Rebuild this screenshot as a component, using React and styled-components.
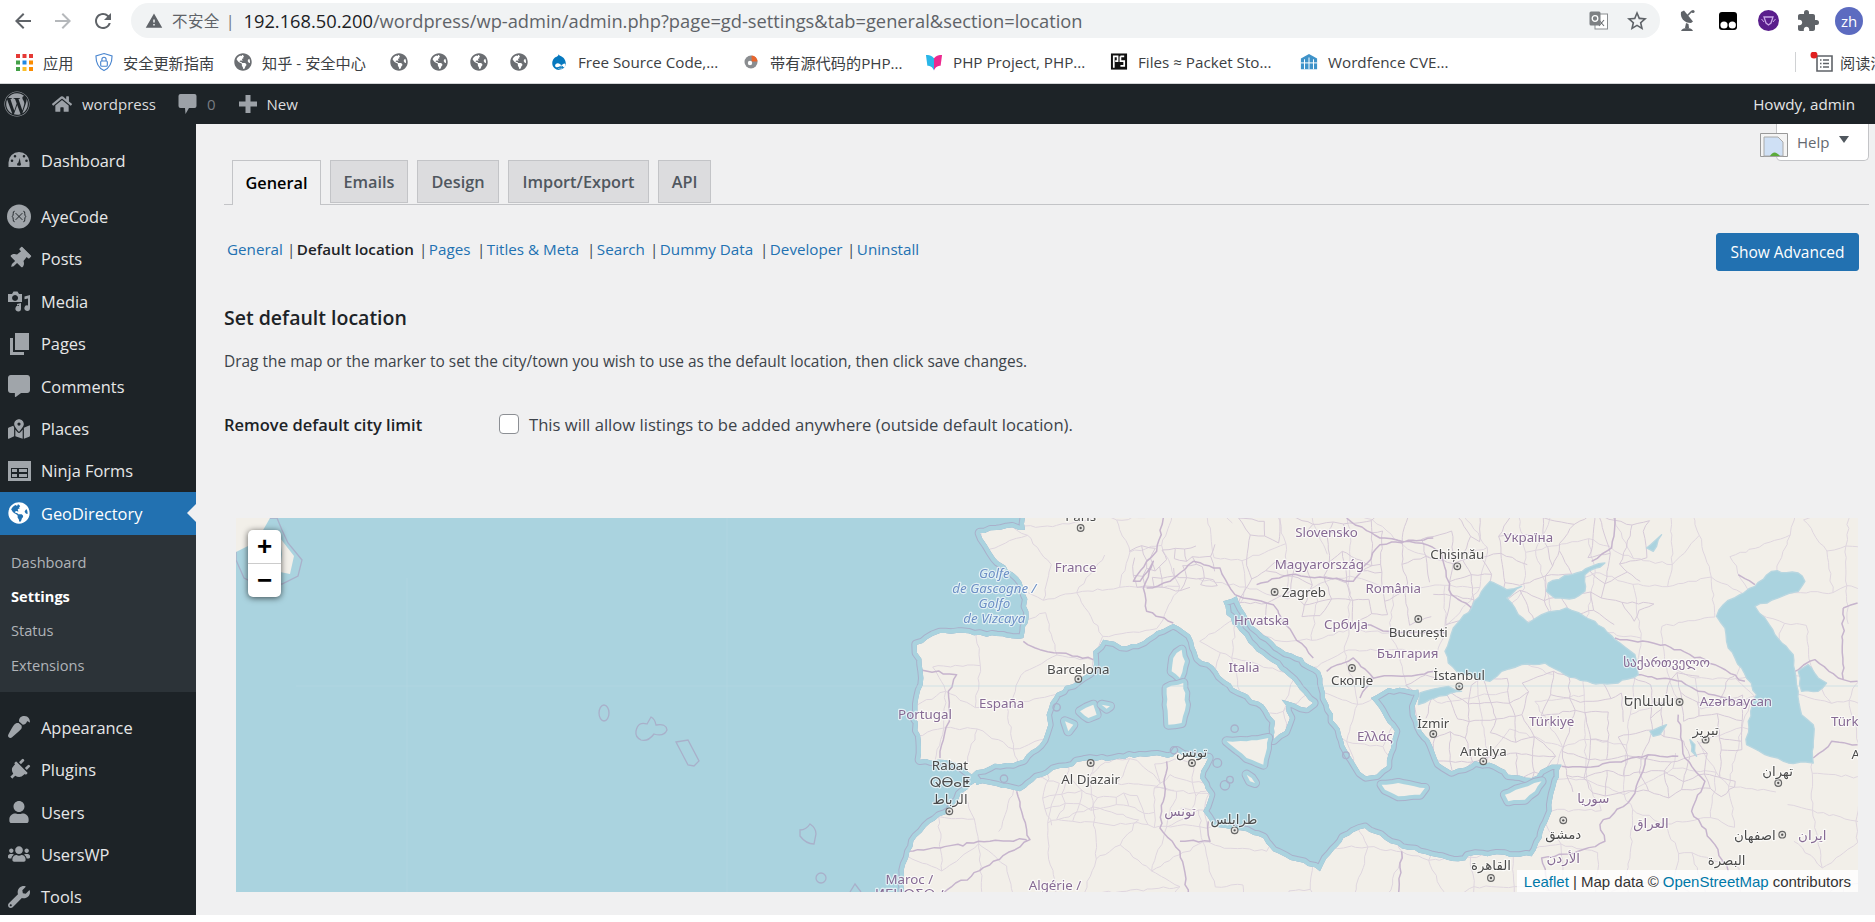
import React from "react";
import styled, { createGlobalStyle } from "styled-components";
import { FaWordpress, FaHome, FaThumbtack, FaCommentAlt, FaGlobeAmericas, FaPaintBrush, FaPlug, FaUser, FaUsers, FaWrench, FaDrupal, FaMapMarkedAlt } from "react-icons/fa";
import { MdArrowBack, MdArrowForward, MdRefresh, MdWarning, MdStarBorder, MdExtension } from "react-icons/md";

const UI = `"Open Sans", "Noto Sans CJK SC", sans-serif`;

const GlobalStyle = createGlobalStyle`
  body {
    margin: 0;
    background: #fff;
    font-family: ${UI};
    overflow: hidden;
  }
`;

/* browser chrome */
const Toolbar = styled.div`
  height: 41px;
  display: flex;
  align-items: center;
  position: relative;
`;

const NavIcon = styled.span`
  width: 40px;
  display: flex;
  justify-content: center;
  font-size: 24px;
  color: ${(p) => (p.$dim ? "#b5b8bb" : "#5f6368")};
`;

const NavGroup = styled.div`
  display: flex;
  padding-left: 3px;
  width: 131px;
  box-sizing: border-box;
`;

const Omnibox = styled.div`
  width: 1529px;
  height: 35px;
  border-radius: 18px;
  background: #f1f3f4;
  display: flex;
  align-items: center;
  padding-left: 14px;
  box-sizing: border-box;
  font-size: 18.3px;
  color: #5f6368;
  white-space: nowrap;
`;

const Insecure = styled.span`
  margin-left: 9px;
  font-size: 15.5px;
  letter-spacing: 0.4px;
`;

const UrlPipe = styled.span`
  margin: 0 9px 0 6px;
  font-size: 16px;
  color: #70757a;
`;

const UrlHost = styled.span`
  color: #202124;
`;

const OmniRight = styled.div`
  margin-left: auto;
  display: flex;
  align-items: center;
  gap: 17px;
  padding-right: 11px;
`;

const ExtIcons = styled.div`
  display: flex;
  align-items: center;
  width: 215px;
  padding-left: 16px;
  gap: 16px;
  box-sizing: border-box;
`;

const ExtBox = styled.span`
  width: 24px;
  height: 24px;
  display: flex;
  align-items: center;
  justify-content: center;
  font-size: 21px;
  color: #5f6368;
`;

const Avatar = styled.span`
  width: 28px;
  height: 28px;
  border-radius: 50%;
  background: #5c6bc0;
  color: #fff;
  font-size: 15px;
  display: flex;
  align-items: center;
  justify-content: center;
  margin-left: -1px;
`;

const BookmarkBar = styled.div`
  height: 42px;
  border-bottom: 1px solid #d3d5d7;
  box-sizing: content-box;
  display: flex;
  align-items: center;
  padding-left: 15px;
  font-size: 15.2px;
  color: #3c4043;
  overflow: hidden;
  position: relative;
`;

const Bookmark = styled.div`
  width: ${(p) => p.$w}px;
  flex: none;
  display: flex;
  align-items: center;
  gap: 10px;
  white-space: nowrap;
`;

const BookmarkIcon = styled.span`
  width: 18px;
  height: 18px;
  flex: none;
  display: flex;
  align-items: center;
  justify-content: center;
  font-size: 18px;
  color: ${(p) => p.$c || "#6b6e72"};
`;

const ReadingList = styled.div`
  position: absolute;
  right: 0;
  top: 11px;
  height: 20px;
  width: 80px;
  border-left: 1px solid #d0d2d4;
  display: flex;
  align-items: center;
  gap: 6px;
  padding-left: 14px;
  box-sizing: border-box;
  white-space: nowrap;
  overflow: hidden;
`;

const ListSvg = styled.svg`
  flex: none;
`;

/* wp admin bar */
const AdminBar = styled.div`
  height: 40px;
  background: #1d2327;
  color: #f0f0f1;
  display: flex;
  align-items: center;
  font-size: 15px;
  padding-left: 4px;
`;

const BarItem = styled.div`
  display: flex;
  align-items: center;
  gap: 10px;
  margin-left: ${(p) => p.$ml || 0}px;
  color: #dcdcde;
`;

const BarIcon = styled.span`
  display: flex;
  font-size: ${(p) => p.$size || 20}px;
  color: #9ca1a7;
`;

const Count = styled.span`
  color: #787c82;
`;

const Howdy = styled.div`
  margin-left: auto;
  padding-right: 20px;
  font-size: 15.2px;
  color: #e4e5e6;
`;

const Shell = styled.div`
  height: 791px;
  display: flex;
  overflow: hidden;
`;

/* wp side menu */
const Sidebar = styled.nav`
  width: 196px;
  flex: none;
  background: #1d2327;
  padding-top: 15px;
  box-sizing: border-box;
`;

const MenuItem = styled.div`
  height: 42.4px;
  display: flex;
  align-items: center;
  position: relative;
  padding-left: 7px;
  margin-top: ${(p) => (p.$sep ? 14 : 0)}px;
  background: ${(p) => (p.$active ? "#2271b1" : "transparent")};
  color: ${(p) => (p.$active ? "#fff" : "#e6e7e8")};
  font-size: 16.4px;
  ${(p) =>
    p.$active &&
    `&::after {
      content: "";
      position: absolute;
      right: 0;
      top: 50%;
      margin-top: -9px;
      border: 9px solid transparent;
      border-right-color: #f0f0f1;
    }`}
`;

const MenuIcon = styled.span`
  width: 24px;
  margin-right: 10px;
  display: flex;
  justify-content: center;
  font-size: 22px;
  color: ${(p) => (p.$active ? "#fff" : "#a0a5aa")};
`;

const Turned = styled.span`
  display: flex;
  transform: rotate(${(p) => p.$deg}deg);
`;

const Submenu = styled.div`
  background: #2c3338;
  padding: 10px 0;
`;

const SubItem = styled.div`
  height: 34.4px;
  display: flex;
  align-items: center;
  padding-left: 11px;
  font-size: 14.6px;
  color: ${(p) => (p.$on ? "#fff" : "#b0b4b8")};
  font-weight: ${(p) => (p.$on ? 700 : 400)};
`;

/* content */
const Content = styled.main`
  flex: 1;
  min-width: 0;
  background: #f0f0f1;
  position: relative;
  padding: 36px 6px 0 28px;
`;

const HelpTab = styled.div`
  position: absolute;
  top: 0;
  right: 6px;
  width: 93px;
  height: 37px;
  background: #fff;
  border: 1px solid #c3c4c7;
  border-top: 0;
  border-radius: 0 0 5px 5px;
  box-sizing: border-box;
  display: flex;
  align-items: center;
  padding-left: 20px;
  font-size: 15px;
  color: #646970;
`;

const BrokenImage = styled.svg`
  position: absolute;
  left: -17px;
  top: 9px;
`;

const HelpArrow = styled.span`
  width: 0;
  height: 0;
  margin: -6px 0 0 10px;
  border: 5px solid transparent;
  border-top: 7px solid #50575e;
  border-bottom: 0;
`;

const Tabs = styled.div`
  display: flex;
  gap: 9px;
  padding-left: 8px;
  height: 45px;
  box-sizing: border-box;
  border-bottom: 1px solid #c3c4c7;
`;

const Tab = styled.div`
  height: ${(p) => (p.$on ? 45 : 43)}px;
  width: ${(p) => p.$w}px;
  box-sizing: border-box;
  border: 1px solid #c3c4c7;
  ${(p) => p.$on && "border-bottom: 0;"}
  background: ${(p) => (p.$on ? "#f0f0f1" : "#dcdcde")};
  color: ${(p) => (p.$on ? "#000" : "#50575e")};
  font-size: 16.3px;
  font-weight: 600;
  display: flex;
  align-items: center;
  justify-content: center;
`;

const SubBar = styled.div`
  display: flex;
  align-items: flex-start;
  justify-content: space-between;
  padding: 34px 10px 0 3px;
  height: 71px;
  box-sizing: border-box;
`;

const SubNav = styled.ul`
  display: flex;
  list-style: none;
  margin: 0;
  padding: 0;
  font-size: 15.2px;
  line-height: 20px;
`;

const SubNavItem = styled.li`
  width: ${(p) => p.$w}px;
  white-space: nowrap;
  color: ${(p) => (p.$on ? "#1d2327" : "#2271b1")};
  font-weight: ${(p) => (p.$on ? 600 : 400)};
`;

const Pipe = styled.span`
  color: #3c434a;
  font-weight: 400;
  margin: 0 1.5px 0 -4px;
`;

const AdvancedButton = styled.button`
  width: 143px;
  height: 38px;
  margin-top: -6px;
  background: #2271b1;
  border: 1px solid #2271b1;
  border-radius: 3px;
  color: #fff;
  font: 400 15.5px ${UI};
`;

const Heading = styled.h2`
  margin: 29px 0 0;
  font-size: 19.5px;
  line-height: 26px;
  font-weight: 600;
  color: #1d2327;
`;

const Lead = styled.p`
  margin: 19px 0 0;
  font-size: 15.45px;
  line-height: 22px;
  color: #3c434a;
`;

const FieldRow = styled.div`
  display: flex;
  align-items: center;
  margin-top: 40px;
  height: 24px;
`;

const FieldLabel = styled.div`
  width: 275px;
  font-size: 16.5px;
  font-weight: 600;
  color: #1d2327;
`;

const CheckBox = styled.span`
  width: 20px;
  height: 20px;
  box-sizing: border-box;
  border: 1px solid #8c8f94;
  border-radius: 4px;
  background: #fff;
  margin-right: 10px;
`;

const CheckText = styled.span`
  font-size: 16.65px;
  color: #3c434a;
`;

/* map */
const MapBox = styled.div`
  position: relative;
  height: 374px;
  margin: 82px 11px 0 12px;
  overflow: hidden;
  background: #f2efe9;
`;

const MapSvg = styled.svg`
  display: block;
  width: 100%;
  height: 100%;
  filter: blur(0.35px);
`;

const ZoomControl = styled.div`
  position: absolute;
  left: 12px;
  top: 12px;
  width: 33px;
  border-radius: 5px;
  background: #fff;
  box-shadow: 0 1px 6px rgba(0, 0, 0, 0.65);
`;

const ZoomBtn = styled.div`
  height: 33px;
  display: flex;
  align-items: center;
  justify-content: center;
  font: 700 26px "Liberation Sans", sans-serif;
  color: #000;
  & + & {
    border-top: 1px solid #ccc;
  }
`;

const Attribution = styled.div`
  position: absolute;
  right: 0;
  bottom: 0;
  height: 22px;
  padding: 0 7px;
  display: flex;
  align-items: center;
  gap: 4px;
  background: rgba(255, 255, 255, 0.8);
  font: 15px "Liberation Sans", sans-serif;
  color: #333;
`;

const AttrLink = styled.span`
  color: #0078a8;
`;

const MapLabel = styled.text`
  font-family: "Noto Sans", "DejaVu Sans", sans-serif;
  font-size: 40px;
  text-anchor: ${(p) => p.$anchor || "middle"};
  paint-order: stroke;
  stroke: rgba(255, 255, 255, 0.65);
  stroke-width: 7px;
  stroke-linejoin: round;
  font-style: ${(p) => (p.$kind === "sea" ? "italic" : "normal")};
  fill: ${(p) => (p.$kind === "sea" ? "#6d90c6" : p.$kind === "land" ? "#866a94" : "#4b4b4b")};
`;

const SEA = "#aad3df";
const LAND = "#f2efe9";
const RING = "#a9b0ca";

const rng = (seed) => () => (seed = (seed * 16807) % 2147483647) / 2147483647;

// breaks straight polygon edges into small irregular steps
const wobble = (d, amp, seed) => {
  const r = rng(seed);
  return d
    .split("M")
    .filter(Boolean)
    .map((sub) => {
      const closed = sub.includes("Z");
      const pts = sub.match(/-?\d+(?:\.\d+)?,-?\d+(?:\.\d+)?/g).map((s) => s.split(",").map(Number));
      if (closed) pts.push(pts[0]);
      const out = [];
      pts.forEach((p, i) => {
        out.push(p);
        const q = pts[i + 1];
        if (!q) return;
        const len = Math.hypot(q[0] - p[0], q[1] - p[1]);
        if (len > 1000) return;
        const n = Math.floor(len / 16);
        for (let k = 1; k < n; k++) {
          out.push([
            Math.round(p[0] + ((q[0] - p[0]) * k) / n + (r() - 0.5) * amp),
            Math.round(p[1] + ((q[1] - p[1]) * k) / n + (r() - 0.5) * amp),
          ]);
        }
      });
      return `M${out.map((p) => p.join(",")).join(" ")}${closed ? "Z" : ""}`;
    })
    .join("");
};

const atlantic = wobble(
  "M-2100,-100 440,-100 435,35 380,30 300,45 320,80 345,120 400,165 430,210 445,280 430,360 300,350 180,345 110,380 125,440 130,480 115,540 105,600 120,650 120,725 175,725 225,735 275,770 290,790 240,830 210,880 150,915 100,970 75,1040 60,1300 -2100,1300 Z",
  9,
  11
);

const med = wobble(
  "M275,770 330,745 430,725 490,665 505,620 500,590 530,525 590,490 640,455 640,400 670,365 740,385 790,370 830,340 880,318 930,350 955,420 1000,445 1060,510 1150,560 1185,610 1180,665 1215,640 1230,600 1205,545 1280,570 1300,555 1250,500 1190,440 1130,400 1080,340 1040,290 1030,250 1070,235 1085,270 1120,325 1190,385 1250,415 1320,460 1335,540 1370,620 1400,695 1430,745 1458,775 1490,770 1521,745 1536,670 1545,640 1515,600 1473,540 1525,510 1615,515 1605,590 1625,640 1655,680 1670,720 1690,745 1715,760 1785,730 1845,740 1885,770 1955,780 2015,740 2045,740 2030,790 2015,880 1985,960 1955,1015 1785,1010 1735,1030 1585,995 1515,965 1455,930 1390,960 1350,1010 1320,1060 1250,1030 1180,1000 1150,960 1100,940 1060,935 1000,925 985,900 970,880 990,830 960,780 975,740 985,720 950,720 890,700 880,715 780,715 700,725 630,725 540,750 470,780 420,820 400,815 330,800 290,800 Z",
  9,
  23
);

const inland = [
  // black sea
  "M1830,190 1880,215 1925,205 1880,240 1915,290 1945,315 1985,290 2060,270 2145,310 2205,365 2265,410 2275,470 2215,495 2135,495 2055,470 1995,435 1925,440 1865,460 1830,490 1745,470 1705,435 1695,400 1720,330 1775,270 1805,220 Z",
  // azov
  "M2005,195 2075,170 2135,145 2175,135 2115,170 2115,220 2085,240 2025,240 2000,220 Z",
  // marmara
  "M1620,525 1705,505 1745,520 1665,540 1615,560 Z",
  // caspian
  "M2625,205 2675,160 2755,165 2775,190 2755,220 2695,240 2625,265 2655,300 2685,350 2740,410 2745,460 2755,520 2765,590 2800,620 2800,735 2725,735 2655,710 2600,680 2605,610 2630,530 2585,450 2545,390 2535,330 2510,295 2530,260 Z",
  // kara bogaz
  "M2755,460 2785,440 2815,480 2840,495 2815,520 2765,520 Z",
  // lakes
  "M2310,640 2360,620 2340,650 2320,655 Z",
  "M2430,665 2445,680 2450,715 2435,700 Z",
  "M2300,90 2345,50 2320,100 Z",
].map((d, i) => wobble(d, 7, 31 + i));

const islands = [
  "M880,420 905,395 915,430 900,480 875,460 Z",
  "M860,510 910,495 918,560 905,615 865,620 860,560 Z",
  "M600,580 640,560 650,590 625,600 Z",
  "M665,560 690,565 680,572 Z",
  "M555,610 580,620 565,640 Z",
  "M1040,670 1100,670 1165,660 1150,740 1100,720 Z",
  "M1505,800 1555,795 1635,810 1620,830 1555,835 1515,815 Z",
  "M1875,830 1925,810 1985,790 1965,820 1935,845 1885,850 Z",
  "M1100,770 1115,780 1125,795 1110,790 Z",
].map((d, i) => wobble(d, 5, 61 + i));

const rings = [
  [530, 568, 11],
  [372, 782, 11],
  [1064, 632, 11],
  [882, 697, 11],
  [1012, 735, 13],
  [1035, 802, 14],
  [1050, 785, 10],
  [1398, 712, 10],
];

// fine admin boundaries: a jittered mesh, the seas are painted over it
const mesh = (x0, y0, x1, y1, step, seed) => {
  const r = rng(seed);
  const cols = Math.ceil((x1 - x0) / step);
  const rows = Math.ceil((y1 - y0) / step);
  const pts = [];
  for (let j = 0; j <= rows; j++) {
    pts[j] = [];
    for (let i = 0; i <= cols; i++) {
      pts[j][i] = [
        Math.round(x0 + i * step + (r() - 0.5) * step * 0.8),
        Math.round(y0 + j * step + (r() - 0.5) * step * 0.8),
      ];
    }
  }
  let d = "";
  for (let j = 0; j <= rows; j++) {
    for (let i = 0; i <= cols; i++) {
      const [x, y] = pts[j][i];
      if (i < cols && r() > 0.25) d += `M${x},${y} ${pts[j][i + 1].join(",")}`;
      if (j < rows && r() > 0.25) d += `M${x},${y} ${pts[j + 1][i].join(",")}`;
    }
  }
  return d;
};

const lightNet = wobble(mesh(-60, -20, 2960, 1140, 115, 77) + mesh(500, 730, 1000, 900, 48, 41), 8, 5);
const denseNet = wobble(mesh(1100, 0, 2300, 300, 60, 19) + mesh(1600, 480, 2560, 800, 58, 53) + mesh(760, 90, 980, 190, 30, 7), 6, 9);

const borders = wobble(
  [
    "M430,370 480,395 540,405 640,425",
    "M120,455 230,470 205,520 210,590 185,680 180,720",
    "M880,315 800,280 790,210 820,130 780,190 760,190 800,130 830,100 850,0",
    "M800,210 870,190 940,130 1020,150 1065,230 1090,240 1180,260 1240,350 1300,420",
    "M1130,200 1230,170 1340,180 1420,190 1500,80 1660,60",
    "M410,820 430,900 450,965 340,1030 190,1125",
    "M860,730 850,850 840,930 900,1000 925,1135",
    "M985,910 990,970 900,970",
    "M1565,1000 1555,1135",
    "M2045,745 2155,745 2305,710 2395,715",
    "M2395,590 2415,720 2475,790 2435,880 2505,980 2545,1060",
    "M2305,710 2255,840 2160,920 2175,970 2095,1000 1985,1020 2010,1100",
    "M1685,110 1715,230 1775,270",
    "M1455,320 1525,340 1695,345",
    "M1465,480 1615,470 1665,460",
    "M2135,130 2195,90 2205,0",
    "M2575,170 2625,200",
    "M2890,270 2933,255",
    "M2890,270 2890,485 2933,490",
    "M2745,460 2805,425 2875,480 2890,485",
    "M2205,360 2355,380 2505,440 2595,490",
    "M2265,470 2405,490 2455,520 2600,560",
    "M2800,720 2855,670 2933,680",
    "M1340,460 1420,420 1480,480 1440,540",
    "M80,1000 330,970 440,965",
    "M1400,0 1500,60 1640,80 1700,110",
  ].join(""),
  8,
  13
);

const labels = [
  ["Paris", 602, 8, "city"],
  ["France", 587, 162, "land"],
  ["Slovensko", 1340, 57, "land"],
  ["Magyarország", 1318, 152, "land"],
  ["Zagreb", 1205, 237, "city", "start"],
  ["Hrvatska", 1145, 320, "land"],
  ["Србија", 1398, 332, "land"],
  ["România", 1540, 225, "land"],
  ["Italia", 1092, 462, "land"],
  ["Barcelona", 595, 467, "city"],
  ["España", 365, 570, "land"],
  ["Portugal", 135, 603, "land"],
  ["Rabat", 210, 757, "city"],
  ["ⵕⴱⴰⵟ", 210, 807, "city"],
  ["الرباط", 210, 858, "city"],
  ["Al Djazair", 632, 797, "city"],
  ["تونس", 935, 716, "city"],
  ["تونس", 900, 894, "land"],
  ["طرابلس", 1062, 917, "city"],
  ["Скопје", 1416, 500, "city"],
  ["Maroc /", 88, 1097, "land"],
  ["ⵍⵎⵖⵔⵉⴱ /", 88, 1142, "land"],
  ["Algérie /", 525, 1117, "land"],
  ["Golfe", 343, 180, "sea"],
  ["de Gascogne /", 343, 225, "sea"],
  ["Golfo", 343, 270, "sea"],
  ["de Vizcaya", 343, 315, "sea"],
  ["Україна", 1945, 72, "land"],
  ["Chișinău", 1732, 122, "city"],
  ["București", 1615, 357, "city"],
  ["България", 1583, 419, "land"],
  ["İstanbul", 1738, 487, "city"],
  ["İzmir", 1660, 630, "city"],
  ["Ελλάς", 1485, 668, "land"],
  ["Türkiye", 2015, 624, "land"],
  ["Antalya", 1810, 714, "city"],
  ["საქართველო", 2360, 447, "land"],
  ["Երևան", 2307, 564, "city"],
  ["Azərbaycan", 2568, 564, "land"],
  ["تبریز", 2477, 652, "city"],
  ["Türk", 2853, 624, "land", "start"],
  ["A", 2915, 724, "city", "start"],
  ["تهران", 2693, 773, "city"],
  ["سوريا", 2140, 856, "land"],
  ["العراق", 2313, 931, "land"],
  ["دمشق", 2050, 963, "city"],
  ["اصفهان", 2625, 966, "city"],
  ["ايران", 2797, 966, "land"],
  ["الأردن", 2050, 1036, "land"],
  ["البصرة", 2540, 1041, "city"],
  ["القاهرة", 1833, 1056, "city"],
];

const dots = [
  [602, 30], [1184, 222], [595, 483], [208, 880], [632, 735], [936, 735], [1064, 937], [1416, 450],
  [1732, 145], [1615, 303], [1738, 505], [1660, 648], [1810, 730], [2399, 552], [2477, 665],
  [2695, 795], [2050, 907], [2707, 950], [1833, 1080],
];

const WorldMap = () => (
  <MapSvg viewBox="0 0 1622 374" preserveAspectRatio="none">
    <defs>
      <clipPath id="seaClip">
        <path d={atlantic} />
        <path d={med} />
      </clipPath>
    </defs>
    <rect width="1622" height="374" fill={LAND} />
    <g transform="translate(644 0) scale(0.3333)">
      <path d={lightNet} fill="none" stroke="#dfd6df" strokeWidth="3" />
      <path d={denseNet} fill="none" stroke="#d6cad8" strokeWidth="3" />
      <path d={borders} fill="none" stroke="#c6b4cd" strokeWidth="4.5" strokeLinejoin="round" />
      <path d={atlantic} fill={SEA} />
      <path d={med} fill={SEA} />
      <g clipPath="url(#seaClip)" fill="none" strokeLinejoin="round">
        <path d={atlantic} stroke={RING} strokeWidth="32" />
        <path d={med} stroke={RING} strokeWidth="32" />
        <path d={atlantic} stroke={SEA} strokeWidth="26" />
        <path d={med} stroke={SEA} strokeWidth="26" />
      </g>
      {inland.map((d) => (
        <path key={d} d={d} fill={SEA} stroke="#b8d6e0" strokeWidth="4" strokeLinejoin="round" />
      ))}
      {rings.map(([x, y, r]) => (
        <circle key={`${x}-${y}`} cx={x} cy={y} r={r} fill="none" stroke={RING} strokeWidth="4" />
      ))}
      {islands.map((d) => (
        <g key={d} strokeLinejoin="round">
          <path d={d} fill="none" stroke={RING} strokeWidth="30" />
          <path d={d} fill="none" stroke={SEA} strokeWidth="24" />
          <path d={d} fill={LAND} />
        </g>
      ))}
      {dots.map(([x, y]) => (
        <g key={`${x}-${y}`}>
          <circle cx={x} cy={y} r="10" fill="#e8e6e2" stroke="#666" strokeWidth="3.5" />
          <circle cx={x} cy={y} r="3.5" fill="#555" />
        </g>
      ))}
      {labels.map(([t, x, y, kind, anchor]) => (
        <MapLabel key={`${t}-${x}`} x={x} y={y} $kind={kind} $anchor={anchor}>
          {t}
        </MapLabel>
      ))}
    </g>
    {/* far atlantic */}
    <path d="M0,0 L41,0 46,12 52,25 66,42 62,58 46,66 24,68 8,60 0,42 Z" fill="none" stroke={RING} strokeWidth="1.3" />
    <path d="M0,0 L34,0 26,14 16,26 0,34 Z M44,20 L58,38 54,56 44,54 46,36 Z" fill={LAND} />
    <g fill="none" stroke={RING} strokeWidth="1.3">
      <ellipse cx="368" cy="195" rx="5" ry="8" />
      <path d="M400,213 Q402,203 411,206 L415,199 Q419,201 420,207 Q430,205 431,212 Q428,219 418,216 Q412,224 405,222 Q399,219 400,213 Z" />
      <path d="M440,224 L452,222 L463,243 L458,248 L452,247 Z" />
      <path d="M564,312 Q570,312 574,306 Q580,310 580,316 L578,326 Q570,326 564,318 Z" />
      <ellipse cx="585" cy="360" rx="5" ry="5" />
      <path d="M614,374 L619,366 L625,374" />
    </g>
    <path d="M171,60 V374 M491,0 V374 M60,168 H1622" stroke="#b6d9e3" strokeWidth="1" fill="none" opacity="0.55" />
  </MapSvg>
);

/* small drawn icons */
const Grid = () => (
  <svg width="17" height="17" viewBox="0 0 17 17">
    {["#e53935", "#e53935", "#e53935", "#43a047", "#1e88e5", "#fb8c00", "#43a047", "#fbc02d", "#fb8c00"].map((c, i) => (
      <rect key={i} x={(i % 3) * 6.5} y={Math.floor(i / 3) * 6.5} width="4" height="4" fill={c} />
    ))}
  </svg>
);

const Shield = () => (
  <svg width="19" height="20" viewBox="0 0 19 20" fill="none" stroke="#4a86d0" strokeWidth="1.2">
    <path d="M9.5 1 L18 3.6 C18 11 16 16 9.5 19 C3 16 1 11 1 3.6 Z" />
    <rect x="6" y="9" width="7" height="5.5" rx="1" />
    <path d="M7.3 9 V7.2 a2.2 2.2 0 0 1 4.4 0 V9" />
  </svg>
);

const PieIcon = () => (
  <svg width="14" height="14" viewBox="0 0 14 14">
    <circle cx="7" cy="7" r="6.5" fill="#8a8d90" />
    <path d="M7.6 0.5 A6.5 6.5 0 0 1 13.5 6.4 H7.6 Z" fill="#e8652c" />
    <circle cx="6" cy="8" r="2.2" fill="#fff" />
  </svg>
);

const BookIcon = () => (
  <svg width="19" height="19" viewBox="0 0 19 19">
    <path d="M9.5 5 C7 2 4 1.5 1 1.5 L2.5 13 C5 13 8 14 9.5 18 Z" fill="#29b6e8" />
    <path d="M9.5 5 C12 2 15 1.5 18 1.5 L16.5 13 C14 13 11 14 9.5 18 Z" fill="#ec2a90" />
  </svg>
);

const PacketIcon = () => (
  <svg width="19" height="20" viewBox="0 0 19 20">
    <rect x="1" y="1" width="17" height="17" fill="#111" />
    <path d="M4 16 V4 H8 V9 H5.5 M11 4 H15 M11 4 V9 H15 V14 H11" fill="none" stroke="#fff" strokeWidth="1.8" />
  </svg>
);

const FenceIcon = () => (
  <svg width="20" height="20" viewBox="0 0 20 20">
    <path d="M1 6 L10 1 L19 6 V18 H1 Z" fill="#3f93c9" />
    <path d="M5 7 V18 M10 5 V18 M15 7 V18 M1 11 H19" stroke="#fff" strokeWidth="1.1" />
  </svg>
);

const TranslateIcon = () => (
  <svg width="19" height="19" viewBox="0 0 19 19">
    <rect x="6" y="3" width="12.5" height="15" fill="#fff" stroke="#8a8d90" />
    <path d="M10 9 l5 6 M15 9 l-5 6" stroke="#6b6e72" strokeWidth="1.1" />
    <rect x="0.5" y="0.5" width="11" height="14" rx="1.5" fill="#7d8083" />
    <circle cx="6" cy="7.5" r="2.8" fill="none" stroke="#fff" strokeWidth="1.3" />
  </svg>
);

const DishIcon = () => (
  <svg width="18" height="24" viewBox="0 0 18 24" fill="#5f6368">
    <path d="M2 3 C1 9 5 14 12 14 L14 12.5 L5 1.5 Z" />
    <path d="M8 7 L13 2" stroke="#5f6368" strokeWidth="1.6" />
    <circle cx="14" cy="2.5" r="1.6" />
    <path d="M7 14 L6 19 H10 L9.5 15 Z" />
    <path d="M2 22 Q3 19 8 19 Q13 19 14 22 Z" />
  </svg>
);

const BlackExt = () => (
  <svg width="20" height="20" viewBox="0 0 20 20">
    <rect x="1" y="1" width="18" height="18" rx="3" fill="#000" />
    <circle cx="6" cy="14" r="3.6" fill="#fff" />
    <circle cx="14.3" cy="14" r="3.6" fill="#fff" />
  </svg>
);

const PurpleExt = () => (
  <svg width="21" height="21" viewBox="0 0 21 21">
    <circle cx="10.5" cy="10.5" r="10.5" fill="#5a1e8c" />
    <path d="M6 7 L15 7 L13 13 L10.5 15 L8 13 Z" fill="none" stroke="#c9a8e6" strokeWidth="1.3" />
    <path d="M3.5 9 L6 12 M17.5 9 L15 12" stroke="#c9a8e6" />
  </svg>
);

const ListIcon = () => (
  <ListSvg width="24" height="22" viewBox="0 0 24 22">
    <path d="M7 5 H22 V20 H7 Z M10 9 h1.5 M13 9 h6 M10 12.5 h1.5 M13 12.5 h6 M10 16 h1.5 M13 16 h6" fill="none" stroke="#5f6368" strokeWidth="1.6" />
    <circle cx="4" cy="4" r="3.5" fill="#e02020" />
  </ListSvg>
);

const GaugeIcon = () => (
  <svg width="22" height="18" viewBox="0 0 22 18" fill="currentColor">
    <path d="M11 1 A10.5 10.5 0 0 0 0.5 11.5 V16 H21.5 V11.5 A10.5 10.5 0 0 0 11 1 Z M4 11 a1.3 1.3 0 1 1 0 -2.6 a1.3 1.3 0 0 1 0 2.6 Z M7 6.5 a1.3 1.3 0 1 1 0 -2.6 a1.3 1.3 0 0 1 0 2.6 Z M16 6.5 a1.3 1.3 0 1 1 0 -2.6 a1.3 1.3 0 0 1 0 2.6 Z M18.5 11 a1.3 1.3 0 1 1 0 -2.6 a1.3 1.3 0 0 1 0 2.6 Z M9.3 14.5 a2 2 0 0 1 1 -2.8 L11.8 7 L12.5 11.8 a2 2 0 0 1 -.3 2.9 Z" fillRule="evenodd" />
  </svg>
);

const AyeIcon = () => (
  <svg width="25" height="25" viewBox="0 0 25 25">
    <circle cx="12.5" cy="12.5" r="12.5" fill="currentColor" />
    <path d="M9 9 L16 16 M9 16 L16 9" stroke="#1d2327" strokeWidth="1" fill="none" />
    <path d="M8 7 q-2 0 -1.5 2.5 q0 2 -1 3 q1 1 1 3 q-.5 2.5 1.5 2.5 M17 7 q2 0 1.5 2.5 q0 2 1 3 q-1 1 -1 3 q.5 2.5 -1.5 2.5" stroke="#1d2327" strokeWidth="1" fill="none" />
  </svg>
);

const MediaIcon = () => (
  <svg width="24" height="22" viewBox="0 0 24 22" fill="currentColor">
    <path d="M1 4 H5 L6.5 1.5 H10.5 L12 4 H15 V12 H1 Z M8 5 a3 3 0 1 0 .1 0 Z" fillRule="evenodd" />
    <path d="M17.5 6.5 L23 5 V18 a2.8 2.8 0 1 1 -2 -2.6 V8.5 L17.5 9.3 Z" />
    <path d="M12 15 L16 14 V19.5 a2.8 2.8 0 1 1 -2 -2.6 V16 L12 16.5 Z" transform="translate(-2 -1)" />
  </svg>
);

const PagesIcon = () => (
  <svg width="20" height="22" viewBox="0 0 20 22" fill="currentColor">
    <path d="M6 0 H20 V17 H6 Z" />
    <path d="M1 5 H4 V19 H15 V22 H1 Z" />
  </svg>
);

const FormsIcon = () => (
  <svg width="23" height="20" viewBox="0 0 23 20" fill="currentColor">
    <path d="M0 0 H23 V20 H0 Z M3 7 V17 H20 V7 Z" fillRule="evenodd" />
    <path d="M4 8 H9 V11 H4 Z M11 8 H19 V11 H11 Z M4 13 H9 V16 H4 Z M11 13 H19 V16 H11 Z" />
  </svg>
);

const CommentIcon = () => (
  <svg width="19" height="22" viewBox="0 0 19 22" fill="currentColor">
    <path d="M2.5 1 H16.5 A2 2 0 0 1 18.5 3 V13 A2 2 0 0 1 16.5 15 H11 L7.5 21 L7 15 H2.5 A2 2 0 0 1 0.5 13 V3 A2 2 0 0 1 2.5 1 Z" />
  </svg>
);

const menuTop = [
  { t: "AyeCode", i: <AyeIcon />, sep: true },
  { t: "Posts", i: <Turned $deg={45}><FaThumbtack /></Turned> },
  { t: "Media", i: <MediaIcon /> },
  { t: "Pages", i: <PagesIcon /> },
  { t: "Comments", i: <FaCommentAlt /> },
  { t: "Places", i: <FaMapMarkedAlt /> },
  { t: "Ninja Forms", i: <FormsIcon /> },
];

const menuBottom = [
  { t: "Appearance", i: <Turned $deg={180}><FaPaintBrush /></Turned>, sep: true },
  { t: "Plugins", i: <Turned $deg={45}><FaPlug /></Turned> },
  { t: "Users", i: <FaUser /> },
  { t: "UsersWP", i: <FaUsers /> },
  { t: "Tools", i: <FaWrench /> },
];

const subNav = [
  ["General", 64],
  ["Default location", 132, true],
  ["Pages", 58],
  ["Titles & Meta", 110],
  ["Search", 63],
  ["Dummy Data", 110],
  ["Developer", 87],
  ["Uninstall", 70],
];

const tabs = [
  ["General", 89, true],
  ["Emails", 78],
  ["Design", 82],
  ["Import/Export", 141],
  ["API", 53],
];

const App = () => {
  return (
    <>
      <GlobalStyle />
      <Toolbar>
        <NavGroup>
          <NavIcon><MdArrowBack /></NavIcon>
          <NavIcon $dim><MdArrowForward /></NavIcon>
          <NavIcon><MdRefresh /></NavIcon>
        </NavGroup>
        <Omnibox>
          <MdWarning size={18} />
          <Insecure>不安全</Insecure>
          <UrlPipe>|</UrlPipe>
          <UrlHost>192.168.50.200</UrlHost>/wordpress/wp-admin/admin.php?page=gd-settings&amp;tab=general&amp;section=location
          <OmniRight>
            <TranslateIcon />
            <MdStarBorder size={24} />
          </OmniRight>
        </Omnibox>
        <ExtIcons>
          <ExtBox><DishIcon /></ExtBox>
          <ExtBox><BlackExt /></ExtBox>
          <ExtBox><PurpleExt /></ExtBox>
          <ExtBox><MdExtension size={24} /></ExtBox>
          <Avatar>zh</Avatar>
        </ExtIcons>
      </Toolbar>
      <BookmarkBar>
        <Bookmark $w={80}><BookmarkIcon><Grid /></BookmarkIcon>应用</Bookmark>
        <Bookmark $w={139}><BookmarkIcon><Shield /></BookmarkIcon>安全更新指南</Bookmark>
        <Bookmark $w={156}><BookmarkIcon><FaGlobeAmericas /></BookmarkIcon>知乎 - 安全中心</Bookmark>
        <Bookmark $w={40}><BookmarkIcon><FaGlobeAmericas /></BookmarkIcon></Bookmark>
        <Bookmark $w={40}><BookmarkIcon><FaGlobeAmericas /></BookmarkIcon></Bookmark>
        <Bookmark $w={40}><BookmarkIcon><FaGlobeAmericas /></BookmarkIcon></Bookmark>
        <Bookmark $w={40}><BookmarkIcon><FaGlobeAmericas /></BookmarkIcon></Bookmark>
        <Bookmark $w={192}><BookmarkIcon $c="#0678be"><FaDrupal /></BookmarkIcon>Free Source Code,...</Bookmark>
        <Bookmark $w={183}><BookmarkIcon><PieIcon /></BookmarkIcon>带有源代码的PHP...</Bookmark>
        <Bookmark $w={185}><BookmarkIcon><BookIcon /></BookmarkIcon>PHP Project, PHP...</Bookmark>
        <Bookmark $w={190}><BookmarkIcon><PacketIcon /></BookmarkIcon>Files ≈ Packet Sto...</Bookmark>
        <Bookmark $w={160}><BookmarkIcon><FenceIcon /></BookmarkIcon>Wordfence CVE...</Bookmark>
        <ReadingList><ListIcon />阅读清单</ReadingList>
      </BookmarkBar>
      <AdminBar>
        <BarIcon $size={26}><FaWordpress /></BarIcon>
        <BarItem $ml={22}><BarIcon $size={20}><FaHome /></BarIcon>wordpress</BarItem>
        <BarItem $ml={22}><BarIcon><CommentIcon /></BarIcon><Count>0</Count></BarItem>
        <BarItem $ml={23}>
          <BarIcon>
            <svg width="18" height="18" viewBox="0 0 18 18" fill="currentColor"><path d="M6.5 0 H11.5 V6.5 H18 V11.5 H11.5 V18 H6.5 V11.5 H0 V6.5 H6.5 Z" /></svg>
          </BarIcon>
          New
        </BarItem>
        <Howdy>Howdy, admin</Howdy>
      </AdminBar>
      <Shell>
        <Sidebar>
          <MenuItem><MenuIcon><GaugeIcon /></MenuIcon>Dashboard</MenuItem>
          {menuTop.map((m) => (
            <MenuItem key={m.t} $sep={m.sep}><MenuIcon>{m.i}</MenuIcon>{m.t}</MenuItem>
          ))}
          <MenuItem $active><MenuIcon $active><FaGlobeAmericas /></MenuIcon>GeoDirectory</MenuItem>
          <Submenu>
            <SubItem>Dashboard</SubItem>
            <SubItem $on>Settings</SubItem>
            <SubItem>Status</SubItem>
            <SubItem>Extensions</SubItem>
          </Submenu>
          {menuBottom.map((m) => (
            <MenuItem key={m.t} $sep={m.sep}><MenuIcon>{m.i}</MenuIcon>{m.t}</MenuItem>
          ))}
        </Sidebar>
        <Content>
          <HelpTab>
            <BrokenImage width="28" height="24" viewBox="0 0 28 24">
              <path d="M0.5 0.5 H27.5 V23.5 H0.5 Z" fill="#f4f4f4" stroke="#999" />
              <path d="M4 4 H18 L23 9 V23 H4 Z" fill="#cfe0f5" stroke="#aaa" />
              <path d="M10 23 Q14 16 20 23 Z" fill="#5bab3a" />
            </BrokenImage>
            Help<HelpArrow />
          </HelpTab>
          <Tabs>
            {tabs.map(([t, w, on]) => (
              <Tab key={t} $w={w} $on={on}>{t}</Tab>
            ))}
          </Tabs>
          <SubBar>
            <SubNav>
              {subNav.map(([t, w, on], i) => (
                <SubNavItem key={t} $w={w} $on={on}>
                  {i > 0 && <Pipe>|</Pipe>}
                  {t}
                </SubNavItem>
              ))}
            </SubNav>
            <AdvancedButton>Show Advanced</AdvancedButton>
          </SubBar>
          <Heading>Set default location</Heading>
          <Lead>Drag the map or the marker to set the city/town you wish to use as the default location, then click save changes.</Lead>
          <FieldRow>
            <FieldLabel>Remove default city limit</FieldLabel>
            <CheckBox />
            <CheckText>This will allow listings to be added anywhere (outside default location).</CheckText>
          </FieldRow>
          <MapBox>
            <WorldMap />
            <ZoomControl>
              <ZoomBtn>+</ZoomBtn>
              <ZoomBtn>−</ZoomBtn>
            </ZoomControl>
            <Attribution>
              <AttrLink>Leaflet</AttrLink> | Map data © <AttrLink>OpenStreetMap</AttrLink> contributors
            </Attribution>
          </MapBox>
        </Content>
      </Shell>
    </>
  );
};

export default App;
